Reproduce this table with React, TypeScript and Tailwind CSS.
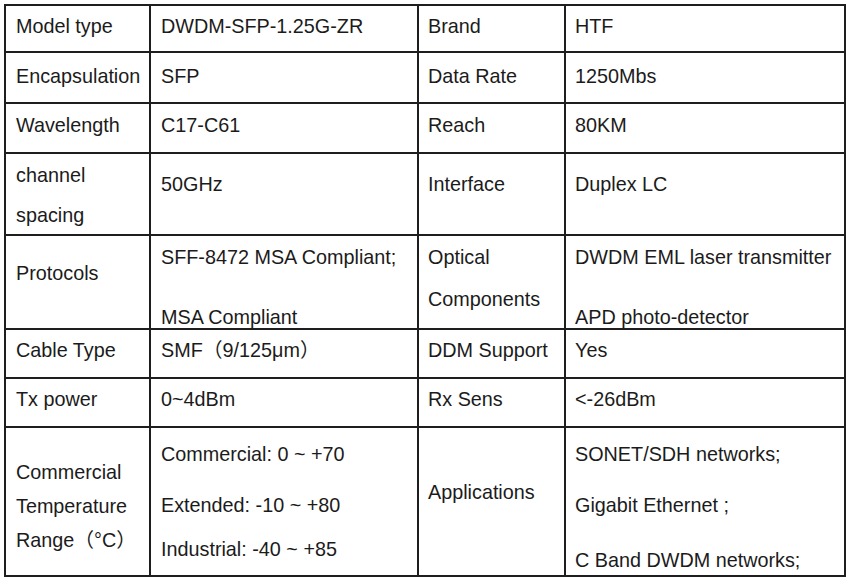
import React from 'react';

const font = { fontFamily: '"Liberation Sans", Arial, "Noto Sans CJK SC", sans-serif' };

function Line({ children, className = '' }: { children: React.ReactNode; className?: string }) {
  return <div className={`whitespace-nowrap leading-[24px] ${className}`}>{children}</div>;
}

export default function App() {
  return (
    <div className="min-h-[586px] w-[850px] bg-white pl-[4px] pt-[4px]" style={font}>
      <div className="grid w-[842px] grid-cols-[143px_266px_145px_278px] grid-rows-[45px_49px_48px_80px_92px_47px_47px_147px] gap-[2px] bg-[#1e1e1e] p-[2px] text-[19.8px] text-[#1b1b1b]">
        {/* row 1 */}
        <div className="bg-white pl-[10px] pt-[8px]"><Line>Model type</Line></div>
        <div className="bg-white pl-[10px] pt-[8px]"><Line>DWDM-SFP-1.25G-ZR</Line></div>
        <div className="bg-white pl-[9px] pt-[8px]"><Line>Brand</Line></div>
        <div className="bg-white pl-[9px] pt-[8px]"><Line>HTF</Line></div>

        {/* row 2 */}
        <div className="bg-white pl-[10px] pt-[11px]"><Line>Encapsulation</Line></div>
        <div className="bg-white pl-[10px] pt-[11px]"><Line>SFP</Line></div>
        <div className="bg-white pl-[9px] pt-[11px]"><Line>Data Rate</Line></div>
        <div className="bg-white pl-[9px] pt-[11px]"><Line>1250Mbs</Line></div>

        {/* row 3 */}
        <div className="bg-white pl-[10px] pt-[9px]"><Line>Wavelength</Line></div>
        <div className="bg-white pl-[10px] pt-[9px]"><Line>C17-C61</Line></div>
        <div className="bg-white pl-[9px] pt-[9px]"><Line>Reach</Line></div>
        <div className="bg-white pl-[9px] pt-[9px]"><Line>80KM</Line></div>

        {/* row 4 */}
        <div className="flex flex-col gap-[16px] bg-white pl-[10px] pt-[9px]">
          <Line>channel</Line>
          <Line>spacing</Line>
        </div>
        <div className="bg-white pl-[10px] pt-[18px]"><Line>50GHz</Line></div>
        <div className="bg-white pl-[9px] pt-[18px]"><Line>Interface</Line></div>
        <div className="bg-white pl-[9px] pt-[18px]"><Line>Duplex LC</Line></div>

        {/* row 5 */}
        <div className="bg-white pl-[10px] pt-[25px]"><Line>Protocols</Line></div>
        <div className="flex flex-col gap-[36px] bg-white pl-[10px] pt-[9px]">
          <Line>SFF-8472 MSA Compliant;</Line>
          <Line>MSA Compliant</Line>
        </div>
        <div className="flex flex-col gap-[18px] bg-white pl-[9px] pt-[9px]">
          <Line>Optical</Line>
          <Line>Components</Line>
        </div>
        <div className="flex flex-col gap-[36px] bg-white pl-[9px] pt-[9px]">
          <Line>DWDM EML laser transmitter</Line>
          <Line>APD photo-detector</Line>
        </div>

        {/* row 6 */}
        <div className="bg-white pl-[10px] pt-[8px]"><Line>Cable Type</Line></div>
        <div className="bg-white pl-[10px] pt-[8px]"><Line>SMF（9/125μm）</Line></div>
        <div className="bg-white pl-[9px] pt-[8px]"><Line>DDM Support</Line></div>
        <div className="bg-white pl-[9px] pt-[8px]"><Line>Yes</Line></div>

        {/* row 7 */}
        <div className="bg-white pl-[10px] pt-[8px]"><Line>Tx power</Line></div>
        <div className="bg-white pl-[10px] pt-[8px]"><Line>0~4dBm</Line></div>
        <div className="bg-white pl-[9px] pt-[8px]"><Line>Rx Sens</Line></div>
        <div className="bg-white pl-[9px] pt-[8px]"><Line>&lt;-26dBm</Line></div>

        {/* row 8 */}
        <div className="flex flex-col gap-[10px] bg-white pl-[10px] pt-[32px]">
          <Line>Commercial</Line>
          <Line>Temperature</Line>
          <Line>Range（°C）</Line>
        </div>
        <div className="flex flex-col bg-white pl-[10px] pt-[14px]">
          <Line>Commercial: 0 ~ +70</Line>
          <Line className="mt-[27px]">Extended: -10 ~ +80</Line>
          <Line className="mt-[20px]">Industrial: -40 ~ +85</Line>
        </div>
        <div className="bg-white pl-[9px] pt-[52px]"><Line>Applications</Line></div>
        <div className="flex flex-col bg-white pl-[9px] pt-[14px]">
          <Line>SONET/SDH networks;</Line>
          <Line className="mt-[27px]">Gigabit Ethernet ;</Line>
          <Line className="mt-[31px]">C Band DWDM networks;</Line>
        </div>
      </div>
    </div>
  );
}
